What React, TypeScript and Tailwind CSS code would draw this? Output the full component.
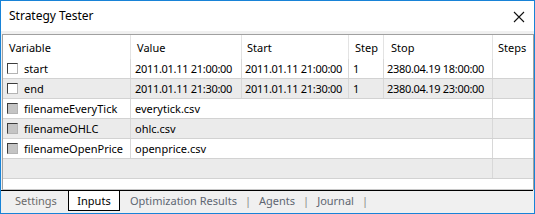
import React from "react";

const font = { fontFamily: '"Segoe UI", "Noto Sans", "Open Sans", sans-serif' };

function Box({ filled }: { filled?: boolean }) {
  return (
    <span
      className={
        "inline-block w-[11px] h-[11px] shrink-0 border-t border-l border-t-[#3c3c3c] border-l-[#3c3c3c] border-r border-b border-r-[#b4b4b4] border-b-[#b4b4b4] " +
        (filled ? "bg-[#c4c4c4]" : "bg-white")
      }
    />
  );
}

const cols = "grid grid-cols-[128px_111px_107px_35px_109px_40px]";

type Row = { name: string; value: string; start?: string; step?: string; stop?: string; filled?: boolean };

const rows: Row[] = [
  { name: "start", value: "2011.01.11 21:00:00", start: "2011.01.11 21:00:00", step: "1", stop: "2380.04.19 18:00:00" },
  { name: "end", value: "2011.01.11 21:30:00", start: "2011.01.11 21:30:00", step: "1", stop: "2380.04.19 23:00:00" },
  { name: "filenameEveryTick", value: "everytick.csv", filled: true },
  { name: "filenameOHLC", value: "ohlc.csv", filled: true },
  { name: "filenameOpenPrice", value: "openprice.csv", filled: true },
];

export default function App() {
  return (
    <div
      className="w-[535px] h-[214px] border border-[#1883d7] bg-[#f0f0f0] flex flex-col text-[11px] text-black leading-none overflow-hidden"
      style={font}
    >
      {/* title bar */}
      <div className="h-[30px] bg-white flex items-center justify-between pl-[8px] pr-[9px] shrink-0">
        <span className="text-[12px]">Strategy Tester</span>
        <svg width="12" height="12" viewBox="0 0 12 12" className="mt-[1px]">
          <path d="M1 1 L11 11 M11 1 L1 11" stroke="#111" strokeWidth="1.1" fill="none" />
        </svg>
      </div>
      <div className="h-[3px] shrink-0" />
      {/* table */}
      <div className="ml-[1px] h-[156px] shrink-0 bg-white border border-[#a0a0a0] border-b-[#c8c8c8] flex flex-col">
        <div className={cols + " h-[24px]"}>
          <div className="border-r border-[#e3e3e3] flex items-center pl-[6px]">Variable</div>
          <div className="border-r border-[#e3e3e3] flex items-center pl-[6px]">Value</div>
          <div className="border-r border-[#e3e3e3] flex items-center pl-[5px]">Start</div>
          <div className="border-r border-[#e3e3e3] flex items-center pl-[6px]">Step</div>
          <div className="border-r border-[#e3e3e3] flex items-center pl-[7px]">Stop</div>
          <div className="flex items-center pl-[5px]">Steps</div>
        </div>
        {rows.map((r, i) => (
          <div
            key={r.name}
            className={cols + " h-[20px] border-b border-[#d2d2d2] " + (i % 2 === 1 ? "bg-[#ebebeb]" : "bg-white")}
          >
            <div className="border-r border-[#d8d8d8] flex items-center pl-[4px] gap-[6px]">
              <Box filled={r.filled} />
              <span>{r.name}</span>
            </div>
            {r.start ? (
              <>
                <div className="border-r border-[#d8d8d8] flex items-center pl-[4px] tracking-[-0.3px]">{r.value}</div>
                <div className="border-r border-[#d8d8d8] flex items-center pl-[3px] tracking-[-0.3px]">{r.start}</div>
                <div className="border-r border-[#d8d8d8] flex items-center pl-[4px]">{r.step}</div>
                <div className="border-r border-[#d8d8d8] flex items-center pl-[3px] tracking-[-0.3px]">{r.stop}</div>
              </>
            ) : (
              <div className="col-span-4 border-r border-[#d8d8d8] flex items-center pl-[4px]">{r.value}</div>
            )}
            <div />
          </div>
        ))}
        <div className={cols + " h-[20px] border-b border-[#d2d2d2] bg-[#ebebeb]"}>
          <div className="col-span-5 border-r border-[#d8d8d8]" />
          <div />
        </div>
      </div>
      {/* tab strip */}
      <div className="h-[1px] bg-black shrink-0 mr-[1px]" />
      <div className="h-[22px] shrink-0 flex items-start text-[#5e6672]">
        <div className="w-[67px] h-[19px] flex items-center pl-[14px] text-[#6a6a6a]">Settings</div>
        <div className="w-[52px] h-[20px] bg-white border-l border-r border-b border-black flex items-center justify-center text-black">
          Inputs
        </div>
        <div className="h-[19px] flex items-center pl-[10px] gap-[8px]">
          <span>Optimization Results</span>
          <span className="text-[#8a8a8a]">|</span>
          <span>Agents</span>
          <span className="text-[#8a8a8a]">|</span>
          <span>Journal</span>
          <span className="text-[#8a8a8a]">|</span>
        </div>
      </div>
    </div>
  );
}
